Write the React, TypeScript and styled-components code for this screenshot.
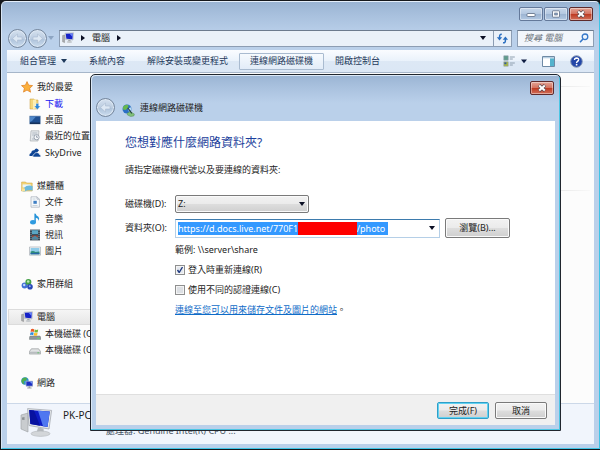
import React, { useState } from "react";
import styled, { createGlobalStyle, css } from "styled-components";

const Global = createGlobalStyle`
  * { box-sizing: border-box; }
  body {
    margin: 0;
    background: #15181c;
    font-family: "Noto Sans", "Noto Sans CJK TC", sans-serif;
    font-size: 9px;
    line-height: 16px;
    color: #1c1c1c;
  }
  button, input, select { font: inherit; color: inherit; margin: 0; }
`;

const Desktop = styled.div`
  position: relative;
  min-height: 100vh;
  display: flex;
  flex-direction: column;
`;

const Window = styled.main`
  flex: 1;
  display: flex;
  flex-direction: column;
  margin: 1px 0 1px 1px;
  padding: 0 5px 4px;
  border: 1px solid #3fc4e6;
  border-top-color: #e4eefa;
  border-left-color: #d9e6f5;
  border-radius: 5px 5px 0 0;
  background: linear-gradient(#9ab4d3, #a9c1de 14px, #bad0ea 32px, #bad0ea);
`;

const TitleBar = styled.header`
  display: flex;
  justify-content: flex-end;
  align-items: flex-start;
  gap: 1px;
  height: 24px;
  padding: 5px 1px 0 0;
`;

const CaptionButton = styled.button<{ $close?: boolean }>`
  display: grid;
  place-items: center;
  width: 24px;
  height: 14px;
  padding: 0;
  border: 1px solid ${(p) => (p.$close ? "#5e2a2c" : "#64799a")};
  border-radius: 2px;
  box-shadow: inset 0 0 0 1px rgba(255, 255, 255, 0.4);
  background: ${(p) =>
    p.$close
      ? "linear-gradient(#e3a597, #d4725f 48%, #bd3a22 52%, #d2705a)"
      : "linear-gradient(#c7d7ea, #b4c8e1 48%, #9cb4d2 52%, #b3c9e3)"};
`;

const AddressRow = styled.div`
  display: flex;
  align-items: center;
  height: 24px;
  gap: 5px;
`;

const NavButtons = styled.div`
  display: flex;
  align-items: center;
  gap: 1px;
  padding-left: 1px;
`;

const RoundButton = styled.button`
  display: grid;
  place-items: center;
  width: 19px;
  height: 19px;
  padding: 0;
  border: 1px solid #75869c;
  border-radius: 50%;
  box-shadow: inset 0 0 0 1px #dde8f4;
  background: linear-gradient(#d5e1ef, #bccde1 50%, #adc2da 52%, #cbdcee);
`;

const AddressBar = styled.div`
  flex: 1;
  display: flex;
  align-items: center;
  height: 17px;
  gap: 7px;
  padding-left: 2px;
  border: 1px solid #8c9db3;
  border-top-color: #6c7b8e;
  background: #eaf1f9;
`;

const Crumb = styled.button`
  padding: 0;
  border: 0;
  background: none;
  line-height: 14px;
`;

const AddressActions = styled.div`
  display: flex;
  align-items: center;
  align-self: stretch;
  gap: 5px;
  margin-left: auto;
`;

const PlainButton = styled.button<{ $divided?: boolean; $tight?: boolean }>`
  display: grid;
  place-items: center;
  align-self: stretch;
  padding: 0 ${(p) => (p.$tight ? 0 : 2)}px;
  border: 0;
  background: none;
  ${(p) =>
    p.$divided &&
    css`
      border-left: 1px solid #8c9db3;
    `}
`;

const SearchBox = styled.label`
  display: flex;
  align-items: center;
  width: 77px;
  height: 17px;
  padding: 0 4px 0 6px;
  border: 1px solid #8c9db3;
  border-top-color: #6c7b8e;
  background: #f2f6fb;
`;

const SearchInput = styled.input`
  flex: 1;
  min-width: 0;
  padding: 0;
  border: 0;
  outline: 0;
  background: none;
  line-height: 14px;
  font-style: italic;
  &::placeholder { color: #6f7680; opacity: 1; }
`;

const Toolbar = styled.div`
  display: flex;
  align-items: center;
  height: 23px;
  padding: 0 9px 0 2px;
  border-bottom: 1px solid #a6b6c9;
  background: linear-gradient(#fafcff, #eaf2fb 50%, #dde8f5 52%, #dbe7f5);
  color: #1e395b;
`;

const ToolButton = styled.button<{ $active?: boolean }>`
  display: flex;
  align-items: center;
  gap: 5px;
  height: 17px;
  padding: 0 10px;
  border: 1px solid ${(p) => (p.$active ? "#a9bbd0" : "transparent")};
  border-radius: 1px;
  background: ${(p) => (p.$active ? "linear-gradient(#f6fafe, #e2ecf8)" : "none")};
  white-space: nowrap;
`;

const ToolIcons = styled.div`
  display: flex;
  align-items: center;
  gap: 11px;
  margin-left: auto;
`;

const Body = styled.div`
  flex: 1;
  display: flex;
  background: #fcfcfc;
`;

const Sidebar = styled.nav`
  display: grid;
  grid-template-rows: repeat(19, 1fr);
  width: 130px;
  padding: 6px 0 12px 1px;
`;

const NavRow = styled.a<{ $level?: number; $selected?: boolean; $blue?: boolean }>`
  display: flex;
  align-items: center;
  gap: 4px;
  padding-left: ${(p) => (p.$level ? 21 : 13)}px;
  line-height: 14px;
  color: ${(p) => (p.$blue ? "#1414f0" : "#1c1c1c")};
  text-decoration: none;
  white-space: nowrap;
  ${(p) =>
    p.$selected &&
    css`
      box-shadow: inset 0 0 0 1px #dcdcdc;
      background: linear-gradient(#f6f6f6, #e6e6e6);
    `}
`;

const Content = styled.section`
  flex: 1;
  display: flex;
  flex-direction: column;
  gap: 103px;
  padding: 13px 4px 0 0;
`;

const Rule = styled.hr`
  width: 100%;
  height: 1px;
  margin: 0;
  border: 0;
  background: linear-gradient(90deg, #e2e2e2 90%, #f8f8f8);
`;

const Details = styled.footer`
  display: flex;
  gap: 10px;
  height: 41px;
  padding: 3px 13px 0;
  border-top: 1px solid #ccd8e8;
  background: #f1f5fc;
`;

const DetailText = styled.div`
  display: grid;
  grid-template-rows: 16px 16px;
`;

const DetailName = styled.span`
  font-size: 10px;
`;

const DetailSpec = styled.span`
  padding-left: 43px;
  color: #4a5566;
`;

const Dialog = styled.section`
  position: absolute;
  inset: 74px 39px 19px 90px;
  display: flex;
  flex-direction: column;
  padding: 0 5px 5px;
  border: 1px solid #20262e;
  border-radius: 5px 5px 0 0;
  box-shadow: inset -1px -1px 0 #4cc6e4, inset 1px 1px 0 #dbe8f6;
  background: linear-gradient(#9ab4d3, #a9c1de 12px, #bad0ea 28px, #bad0ea);
`;

const DialogHead = styled.header`
  display: flex;
  align-items: flex-end;
  height: 46px;
  padding-bottom: 4px;
  gap: 7px;
`;

const DialogTitle = styled.h1`
  flex: 1;
  margin: 0 0 0 -2px;
  padding-bottom: 1px;
  font-size: 9px;
  font-weight: 400;
`;

const DialogClose = styled(CaptionButton)`
  align-self: flex-start;
  margin: 6px 1px 0 0;
`;

const DialogBody = styled.div`
  flex: 1;
  padding: 12px 29px 0;
  background: #fff;
`;

const Heading = styled.h2`
  margin: 0 0 9px;
  font-size: 12px;
  line-height: 20px;
  font-weight: 400;
  color: #1c3f9c;
`;

const Lead = styled.p`
  margin: 0 0 16px;
`;

const Form = styled.form`
  display: grid;
  grid-template-columns: 50px minmax(0, 1fr);
  row-gap: 4px;
  align-items: center;
`;

const FieldLine = styled.div`
  display: flex;
  align-items: center;
  gap: 5px;
  height: 20px;
`;

const SelectWrap = styled.span`
  display: grid;
  align-items: center;
  width: 134px;
  & > * { grid-area: 1 / 1; }
  & > svg { justify-self: end; margin-right: 4px; pointer-events: none; }
`;

const Select = styled.select`
  appearance: none;
  width: 100%;
  height: 18px;
  padding: 0 2px;
  border: 1px solid #7a7a7a;
  border-radius: 2px;
  box-shadow: inset 0 0 0 1px #fafafa;
  background: linear-gradient(#f2f2f2, #ebebeb 48%, #dddddd 52%, #cfcfcf);
`;

const Combo = styled.div`
  position: relative;
  flex: 0 1 265px;
  display: flex;
  align-items: center;
  justify-content: space-between;
  height: 19px;
  padding: 0 2px;
  border: 1px solid #b5cfe7;
  border-top-color: #3d7bad;
`;

const PathInput = styled.input`
  width: 210px;
  height: 13px;
  padding: 0;
  border: 0;
  outline: 0;
  background: #3399ff;
  color: #fff;
  line-height: 13px;
`;

const Redaction = styled.span`
  position: absolute;
  left: 122px;
  top: 2px;
  width: 59px;
  height: 13px;
  background: #fe0000;
`;

const PushButton = styled.button<{ $primary?: boolean; $wide?: boolean }>`
  width: ${(p) => (p.$wide ? 65 : 52)}px;
  height: ${(p) => (p.$wide ? 20 : 17)}px;
  padding: 0;
  border: 1px solid ${(p) => (p.$primary ? "#2f9fc8" : "#7a7a7a")};
  border-radius: 2px;
  box-shadow: inset 0 0 0 1px ${(p) => (p.$primary ? "#62d2f2" : "#fafafa")};
  background: linear-gradient(#f2f2f2, #ebebeb 48%, #dddddd 52%, #cfcfcf);
  line-height: 12px;
`;

const Options = styled.div`
  grid-column: 2;
  display: grid;
  row-gap: 4px;
`;

const Option = styled.label`
  display: flex;
  align-items: center;
  gap: 3px;
  height: 16px;
`;

const CheckBox = styled.input`
  appearance: none;
  width: 10px;
  height: 10px;
  border: 1px solid #8e8f8f;
  box-shadow: inset 0 0 0 1px #f4f4f4;
  background: #dcdfe3;
  &:checked {
    background: #e4e8ee
      url("data:image/svg+xml,%3Csvg xmlns='http://www.w3.org/2000/svg' viewBox='0 0 8 8'%3E%3Cpath d='M1.5 4 3.2 6.5 6.5 1' fill='none' stroke='%23203a80' stroke-width='1.4'/%3E%3C/svg%3E");
  }
`;

const LinkLine = styled.p`
  margin: 0;
  & > a { color: #0f6cc8; }
`;

const DialogFoot = styled.footer`
  display: flex;
  justify-content: flex-end;
  align-items: flex-start;
  gap: 6px;
  height: 31px;
  padding: 7px 8px 0;
  border-top: 1px solid #dfdfdf;
  background: #f0f0f0;
`;

const Caret = ({ right, color = "#0b0f24" }: { right?: boolean; color?: string }) => (
  <svg width={right ? 4 : 6} height={right ? 6 : 4} viewBox={right ? "0 0 4 6" : "0 0 6 4"} aria-hidden>
    <path d={right ? "M0 0 4 3 0 6z" : "M0 0h6L3 4z"} fill={color} />
  </svg>
);

const Arrow = ({ flip }: { flip?: boolean }) => (
  <svg width="13" height="13" viewBox="0 0 13 13" aria-hidden>
    <path
      d={flip ? "M11.5 6.5 6.5 2v3H2v3h4.5v3z" : "M1.5 6.5 6.5 2v3H11v3H6.5v3z"}
      fill="#dde8f4"
      stroke="#a9bbd0"
      strokeWidth="0.6"
    />
  </svg>
);

const CloseGlyph = () => (
  <svg width="10" height="8" viewBox="0 0 10 8" aria-hidden>
    <path d="M2 1.2 8 6.8M8 1.2 2 6.8" stroke="#5c4a50" strokeWidth="3.4" />
    <path d="M2.2 1.4 7.8 6.6M7.8 1.4 2.2 6.6" stroke="#fff" strokeWidth="2" />
  </svg>
);

const ComputerIcon = () => (
  <svg width="12" height="12" viewBox="0 0 12 12" aria-hidden>
    <path d="M.6 3.5 2.6 3v7.6l-2-.8z" fill="#a9adb0" stroke="#777" strokeWidth=".4" />
    <path d="M3 1.2 11.6.8 11 8 3.6 7.5z" fill="#dfe3e8" stroke="#888f99" strokeWidth=".4" />
    <path d="M3.8 1.8 10.9 1.5 10.4 7.2 4.3 6.8z" fill="#1622c8" />
    <path d="M7.5 1.7 10.9 1.5 10.6 5z" fill="#6b86f5" />
    <path d="M6.4 7.8h2l.3 1.7H6z" fill="#a4a9ae" />
    <ellipse cx="7.4" cy="10" rx="2.8" ry=".9" fill="#c4c8cc" />
  </svg>
);

const BigComputer = () => (
  <svg width="33" height="31" viewBox="0 0 33 31" aria-hidden>
    <path d="M1 8 8 6v19l-7-3z" fill="#c9cccf" stroke="#9b9fa3" strokeWidth=".6" />
    <path d="M2 10.5 4.5 10v3L2 12.7z" fill="#8d9296" />
    <path d="M7.6 1.6 31.6 3.4 29 22 9 18.5z" fill="#e4e7ea" stroke="#9ca1a8" strokeWidth=".7" />
    <path d="M9.2 3 29.8 4.6 27.5 20 10.4 17z" fill="#0d1bc4" />
    <path d="M18 3.7 29.8 4.6 27.5 20 23 19.2z" fill="#4f77f0" />
    <path d="M9.2 3 14 3.4 20 18.7 10.4 17z" fill="#0711a0" />
    <path d="M18 20.4 23.5 21.4 23.8 25.5H16.6z" fill="#b5b9bd" />
    <ellipse cx="20.5" cy="26.7" rx="9.5" ry="2.7" fill="#d3d6d9" stroke="#a8acb0" strokeWidth=".5" />
  </svg>
);

const GlobeDrive = () => (
  <svg width="13" height="13" viewBox="0 0 13 13" aria-hidden>
    <circle cx="5" cy="5" r="4.5" fill="#2a6fc4" />
    <path d="M2 1.7Q5 0 6.5 1.2L6 4 3.5 6 1 5.5Q.6 3 2 1.7z" fill="#67b84d" />
    <path d="M6 4.5 9 3.2 9.5 5.5 7 8z" fill="#b8dcf4" />
    <path d="M5 9.5 8 7.5 12.4 10 11.8 12 8.6 12.6 5.5 11z" fill="#7fbf78" stroke="#4d8049" strokeWidth=".4" />
    <path d="M5.7 3.8 9.8 9.4" stroke="#243f3c" strokeWidth="1.1" />
  </svg>
);

const glyphs: Record<string, React.ReactNode> = {
  star: <path d="M6 .6 7.7 4.2l3.9.4-2.9 2.7.9 3.9L6 9.1l-3.5 2 .9-3.9L.5 4.6l3.9-.4z" fill="#fbb03c" stroke="#e07d1c" strokeWidth=".7" />,
  download: (
    <>
      <path d="M1 1h4l1 1h3v9H1z" fill="#f4d77c" stroke="#c89b36" strokeWidth=".5" />
      <path d="M4 2 7 1v9l-3 1.5z" fill="#fbeeb5" />
      <path d="M7 5.5h2.6V8h1.8L8.3 11.6 5.2 8H7z" fill="#2c86d8" stroke="#fff" strokeWidth=".3" />
    </>
  ),
  desktop: (
    <>
      <path d="M.5 2h11v8H.5z" fill="#1e4f92" stroke="#9aaec5" strokeWidth=".7" />
      <path d="M1 2.4h6L3 7 1 8z" fill="#4d86c8" />
      <path d="M1 8.5h10V10H1z" fill="#15315b" />
    </>
  ),
  recent: (
    <>
      <path d="M2 .8h8L9 11H1.2z" fill="#e6e9ec" stroke="#9ca1a6" strokeWidth=".6" />
      <path d="M3.3 3h5M3.1 5h3M3 9h5" stroke="#9aa6b3" strokeWidth=".7" />
      <circle cx="7.6" cy="7.2" r="2.6" fill="#f6f8fa" stroke="#7b8795" strokeWidth=".7" />
      <path d="M7.6 5.6v1.7h1.3" fill="none" stroke="#56657a" strokeWidth=".6" />
    </>
  ),
  cloud: (
    <>
      <path d="M.6 9Q-.2 6.6 2.2 6.1 2.5 3 5.3 3.3 7-.2 10 3.2L5 9z" fill="#0e4595" />
      <path d="M4 10Q3 7.6 5.4 7.2 6 4.8 8.4 5.7 10.6 5.7 10.4 7.6 12.4 8 11.6 10z" fill="#0e4595" stroke="#fcfcfc" strokeWidth=".6" />
    </>
  ),
  library: (
    <>
      <path d="M.6 2h4l1 1h5.6v8H.6z" fill="#f3d273" stroke="#caa03f" strokeWidth=".5" />
      <path d="M1.6 4.4h8v3h-8z" fill="#e9f5fb" />
      <path d="M3 8q3-3.6 8.6-2v4.4Q6 9.6 4 11.4H2z" fill="#6cb9dc" />
      <path d="M1 8.5h3v2.8H1z" fill="#f8e39b" />
    </>
  ),
  document: (
    <>
      <path d="M2 .8h6l2.4 2.4v8H2z" fill="#f7f9fb" stroke="#95a0ac" strokeWidth=".6" />
      <path d="M8 .8v2.4h2.4" fill="none" stroke="#95a0ac" strokeWidth=".6" />
      <path d="M3.5 3h3M3.5 9.5h5" stroke="#a9b8c8" strokeWidth=".6" />
      <path d="M4.4 4.8h3.4v3H4.4z" fill="#3f7fc4" />
    </>
  ),
  music: (
    <>
      <path d="M5.4.6 6.7.8Q7 3 9.4 3.8 11 5.5 9.4 8 9.6 5.3 6.8 4.8V9H5.4z" fill="#2593d9" />
      <ellipse cx="4" cy="9.2" rx="2.9" ry="2.2" fill="#2f9be0" />
    </>
  ),
  video: (
    <>
      <path d="M1 .6h10v10.8H1z" fill="#2b3e4c" />
      <path d="M3 1.2h6v4H3z" fill="#5ba6c4" />
      <path d="M3 6.4h6v4.4H3z" fill="#a14a37" />
      <path d="M3 8.4 6 6.8l3 2v2H3z" fill="#4c87a2" />
      <path d="M2 1.2v10M10 1.2v10" stroke="#cfd8de" strokeWidth=".8" strokeDasharray="1 1" />
    </>
  ),
  picture: (
    <>
      <path d="M.5 2h11v8.2H.5z" fill="#f6f7f8" stroke="#9ba3ab" strokeWidth=".6" />
      <path d="M1.6 3h8.8v6.2H1.6z" fill="#8fcbe9" />
      <path d="M1.6 6.6Q4 5 6.5 7l3.9-.6v2.8H1.6z" fill="#2f8f79" />
      <path d="M1.6 8 10.4 7.8v1.4H1.6z" fill="#2866a8" />
    </>
  ),
  homegroup: (
    <>
      <circle cx="3.6" cy="7.6" r="3" fill="#3f6fd6" />
      <circle cx="7.4" cy="4" r="3" fill="#43a047" />
      <circle cx="9" cy="8.8" r="2.8" fill="#2948b6" />
      <circle cx="7.2" cy="3.5" r="1.3" fill="#bfe8b2" />
      <circle cx="3.2" cy="7" r="1.2" fill="#c2d6fa" />
      <circle cx="8.8" cy="8.2" r="1" fill="#8fb2f4" />
    </>
  ),
  windowsDisk: (
    <>
      <path d="M1 8h10l.8 1.4v2H.4v-2z" fill="#8e979c" stroke="#676d70" strokeWidth=".4" />
      <path d="M8 10.3h2.6" stroke="#5de06b" strokeWidth=".9" />
      <path d="M2 1.2Q3.8.4 5.3 1.4L4.8 4Q3.4 3.2 1.6 3.9z" fill="#ec5a29" />
      <path d="M5.8 1.6q1.6.8 3.4 0L8.7 4.2q-1.7.8-3.4 0z" fill="#78b83a" />
      <path d="M1.5 4.5q1.7-.7 3.2.1L4.2 7.2Q2.7 6.4 1 7.1z" fill="#2e8ddb" />
      <path d="M5.2 4.8q1.6.8 3.4 0L8.1 7.4q-1.7.8-3.4 0z" fill="#fbc02d" />
    </>
  ),
  disk: (
    <>
      <path d="M2.4 4.8h7.2l2 2.8v2.4H.4V7.6z" fill="#e2e4e5" stroke="#84898c" strokeWidth=".6" />
      <path d="M.6 7.7h10.8v2H.6z" fill="#b9bdc0" />
      <path d="M8.4 8.8h1.8" stroke="#4fc55a" strokeWidth=".8" />
    </>
  ),
  network: (
    <>
      <circle cx="4" cy="4" r="3.7" fill="#2f8fd0" />
      <path d="M1.3 1.8Q4-.2 6 1L5 3.6 2.6 4.5 3.4 7.4Q0 6.4.4 3.8z" fill="#4fae4a" />
      <path d="M5 4.2h6.8v5H5z" fill="#1d2ec4" stroke="#b9c2cc" strokeWidth=".7" />
      <path d="M8.4 4.6h3v2.6z" fill="#7396f4" />
      <path d="M7.6 9.2h1.6v1.4h1.4v.9H6.2v-.9h1.4z" fill="#9aa0a6" />
    </>
  ),
};

const NavIcon = ({ name }: { name: string }) =>
  name === "computer" ? (
    <ComputerIcon />
  ) : (
    <svg width="12" height="12" viewBox="0 0 12 12" aria-hidden>
      {glyphs[name]}
    </svg>
  );

type Item = { icon: string; text: string; level?: number; selected?: boolean; blue?: boolean };

const groups: Item[][] = [
  [
    { icon: "star", text: "我的最愛" },
    { icon: "download", text: "下載", level: 1, blue: true },
    { icon: "desktop", text: "桌面", level: 1 },
    { icon: "recent", text: "最近的位置", level: 1 },
    { icon: "cloud", text: "SkyDrive", level: 1 },
  ],
  [
    { icon: "library", text: "媒體櫃" },
    { icon: "document", text: "文件", level: 1 },
    { icon: "music", text: "音樂", level: 1 },
    { icon: "video", text: "視訊", level: 1 },
    { icon: "picture", text: "圖片", level: 1 },
  ],
  [{ icon: "homegroup", text: "家用群組" }],
  [
    { icon: "computer", text: "電腦", selected: true },
    { icon: "windowsDisk", text: "本機磁碟 (C:)", level: 1 },
    { icon: "disk", text: "本機磁碟 (O:)", level: 1 },
  ],
  [{ icon: "network", text: "網路" }],
];

const hiddenPart = "\u00a0".repeat(25);

export default function App() {
  const [path, setPath] = useState(`https://d.docs.live.net/770F1${hiddenPart}/photo`);

  return (
    <Desktop>
      <Global />
      <Window>
        <TitleBar>
          <CaptionButton aria-label="最小化">
            <svg width="10" height="8" viewBox="0 0 10 8" aria-hidden>
              <rect x="1" y="3.5" width="8" height="3" rx=".6" fill="#fff" stroke="#5a6a82" strokeWidth=".8" />
            </svg>
          </CaptionButton>
          <CaptionButton aria-label="最大化">
            <svg width="10" height="8" viewBox="0 0 10 8" aria-hidden>
              <rect x="1.5" y=".8" width="7" height="6.4" rx=".6" fill="#fff" stroke="#5a6a82" strokeWidth=".8" />
              <rect x="3.7" y="3" width="2.6" height="2" fill="#8ba4c4" stroke="#5a6a82" strokeWidth=".6" />
            </svg>
          </CaptionButton>
          <CaptionButton $close aria-label="關閉">
            <CloseGlyph />
          </CaptionButton>
        </TitleBar>

        <AddressRow>
          <NavButtons>
            <RoundButton aria-label="上一頁"><Arrow /></RoundButton>
            <RoundButton aria-label="下一頁"><Arrow flip /></RoundButton>
            <PlainButton $tight aria-label="最近的頁面"><Caret color="#8da5c2" /></PlainButton>
          </NavButtons>
          <AddressBar>
            <ComputerIcon />
            <Caret right />
            <Crumb>電腦</Crumb>
            <Caret right />
            <AddressActions>
              <PlainButton aria-label="先前的位置"><Caret /></PlainButton>
              <PlainButton $divided aria-label="重新整理">
                <svg width="13" height="11" viewBox="0 0 13 11" aria-hidden>
                  <path d="M5.8 1.4Q3.6 1 3.6 3.4V5" fill="none" stroke="#2b6fc0" strokeWidth="1.5" />
                  <path d="M.8 4.2h5.4L3.5 7.4z" fill="#2b6fc0" />
                  <path d="M7 9.8q2.4.4 2.4-2.2V6" fill="none" stroke="#2b6fc0" strokeWidth="1.5" />
                  <path d="M6.7 6.8h5.4L9.4 3.6z" fill="#2b6fc0" />
                </svg>
              </PlainButton>
            </AddressActions>
          </AddressBar>
          <SearchBox>
            <SearchInput placeholder="搜尋 電腦" aria-label="搜尋 電腦" />
            <svg width="10" height="10" viewBox="0 0 10 10" aria-hidden>
              <circle cx="6" cy="3.8" r="2.8" fill="#eef5fd" stroke="#3577c8" strokeWidth="1.3" />
              <path d="M4 6 1 9.2" stroke="#3577c8" strokeWidth="1.6" />
            </svg>
          </SearchBox>
        </AddressRow>

        <Toolbar>
          <ToolButton>組合管理 <Caret color="#1e395b" /></ToolButton>
          <ToolButton>系統內容</ToolButton>
          <ToolButton>解除安裝或變更程式</ToolButton>
          <ToolButton $active>連線網路磁碟機</ToolButton>
          <ToolButton>開啟控制台</ToolButton>
          <ToolIcons>
            <PlainButton aria-label="變更檢視">
              <svg width="24" height="12" viewBox="0 0 24 12" aria-hidden>
                <path d="M.8.8h4.4v4.4H.8z" fill="#5f9c8c" stroke="#8d9cab" strokeWidth=".6" />
                <path d="M.8 6.8h4.4v4.4H.8z" fill="#a9b83f" stroke="#8d9cab" strokeWidth=".6" />
                <path d="M1.4 7.4h2v1.8h-2z" fill="#2e59a8" />
                <path d="M6.8 2h5M6.8 4h3M6.8 8h5M6.8 10h3" stroke="#8797a8" strokeWidth=".9" />
                <path d="M18 4.5h6L21 8.3z" fill="#0f1d42" />
              </svg>
            </PlainButton>
            <PlainButton aria-label="預覽窗格">
              <svg width="13" height="11" viewBox="0 0 13 11" aria-hidden>
                <path d="M.5.5h12v10H.5z" fill="#fff" stroke="#6e8aa5" />
                <path d="M1 1h11v1.3H1z" fill="#b9cfe2" />
                <path d="M8 2.4h4V10H8z" fill="#54b3cd" />
              </svg>
            </PlainButton>
            <PlainButton aria-label="說明">
              <svg width="13" height="13" viewBox="0 0 13 13" aria-hidden>
                <circle cx="6.5" cy="6.5" r="5.8" fill="#2347a8" stroke="#8c9cb8" />
                <path d="M4.5 5Q4.6 3 6.6 3 8.7 3.1 8.6 4.9 8.5 5.9 7.3 6.5 6.6 7 6.6 8" fill="none" stroke="#fff" strokeWidth="1.4" />
                <circle cx="6.6" cy="9.7" r=".9" fill="#fff" />
              </svg>
            </PlainButton>
          </ToolIcons>
        </Toolbar>

        <Body>
          <Sidebar>
            {groups.map((items, g) => (
              <React.Fragment key={g}>
                {g > 0 && <span />}
                {items.map((it) => (
                  <NavRow key={it.text} href="#" $level={it.level} $selected={it.selected} $blue={it.blue}>
                    <NavIcon name={it.icon} />
                    {it.text}
                  </NavRow>
                ))}
              </React.Fragment>
            ))}
          </Sidebar>
          <Content>
            <Rule />
            <Rule />
          </Content>
        </Body>

        <Details>
          <BigComputer />
          <DetailText>
            <DetailName>PK-PC</DetailName>
            <DetailSpec>處理器: Genuine Intel(R) CPU ...</DetailSpec>
          </DetailText>
        </Details>
      </Window>

      <Dialog role="dialog" aria-labelledby="dialog-title">
        <DialogHead>
          <RoundButton aria-label="返回"><Arrow /></RoundButton>
          <GlobeDrive />
          <DialogTitle id="dialog-title">連線網路磁碟機</DialogTitle>
          <DialogClose $close aria-label="關閉">
            <CloseGlyph />
          </DialogClose>
        </DialogHead>
        <DialogBody>
          <Heading>您想對應什麼網路資料夾?</Heading>
          <Lead>請指定磁碟機代號以及要連線的資料夾:</Lead>
          <Form>
            <label htmlFor="drive">磁碟機(D):</label>
            <FieldLine>
              <SelectWrap>
                <Select id="drive" defaultValue="Z:">
                  <option>Z:</option>
                  <option>Y:</option>
                </Select>
                <Caret />
              </SelectWrap>
            </FieldLine>
            <label htmlFor="folder">資料夾(O):</label>
            <FieldLine>
              <Combo>
                <PathInput id="folder" value={path} onChange={(e) => setPath(e.target.value)} />
                <Redaction />
                <PlainButton type="button" aria-label="顯示清單"><Caret /></PlainButton>
              </Combo>
              <PushButton type="button" $wide>瀏覽(B)...</PushButton>
            </FieldLine>
            <Options>
              <span>範例: \\server\share</span>
              <Option><CheckBox type="checkbox" defaultChecked />登入時重新連線(R)</Option>
              <Option><CheckBox type="checkbox" />使用不同的認證連線(C)</Option>
              <LinkLine><a href="#">連線至您可以用來儲存文件及圖片的網站</a>。</LinkLine>
            </Options>
          </Form>
        </DialogBody>
        <DialogFoot>
          <PushButton $primary>完成(F)</PushButton>
          <PushButton>取消</PushButton>
        </DialogFoot>
      </Dialog>
    </Desktop>
  );
}
